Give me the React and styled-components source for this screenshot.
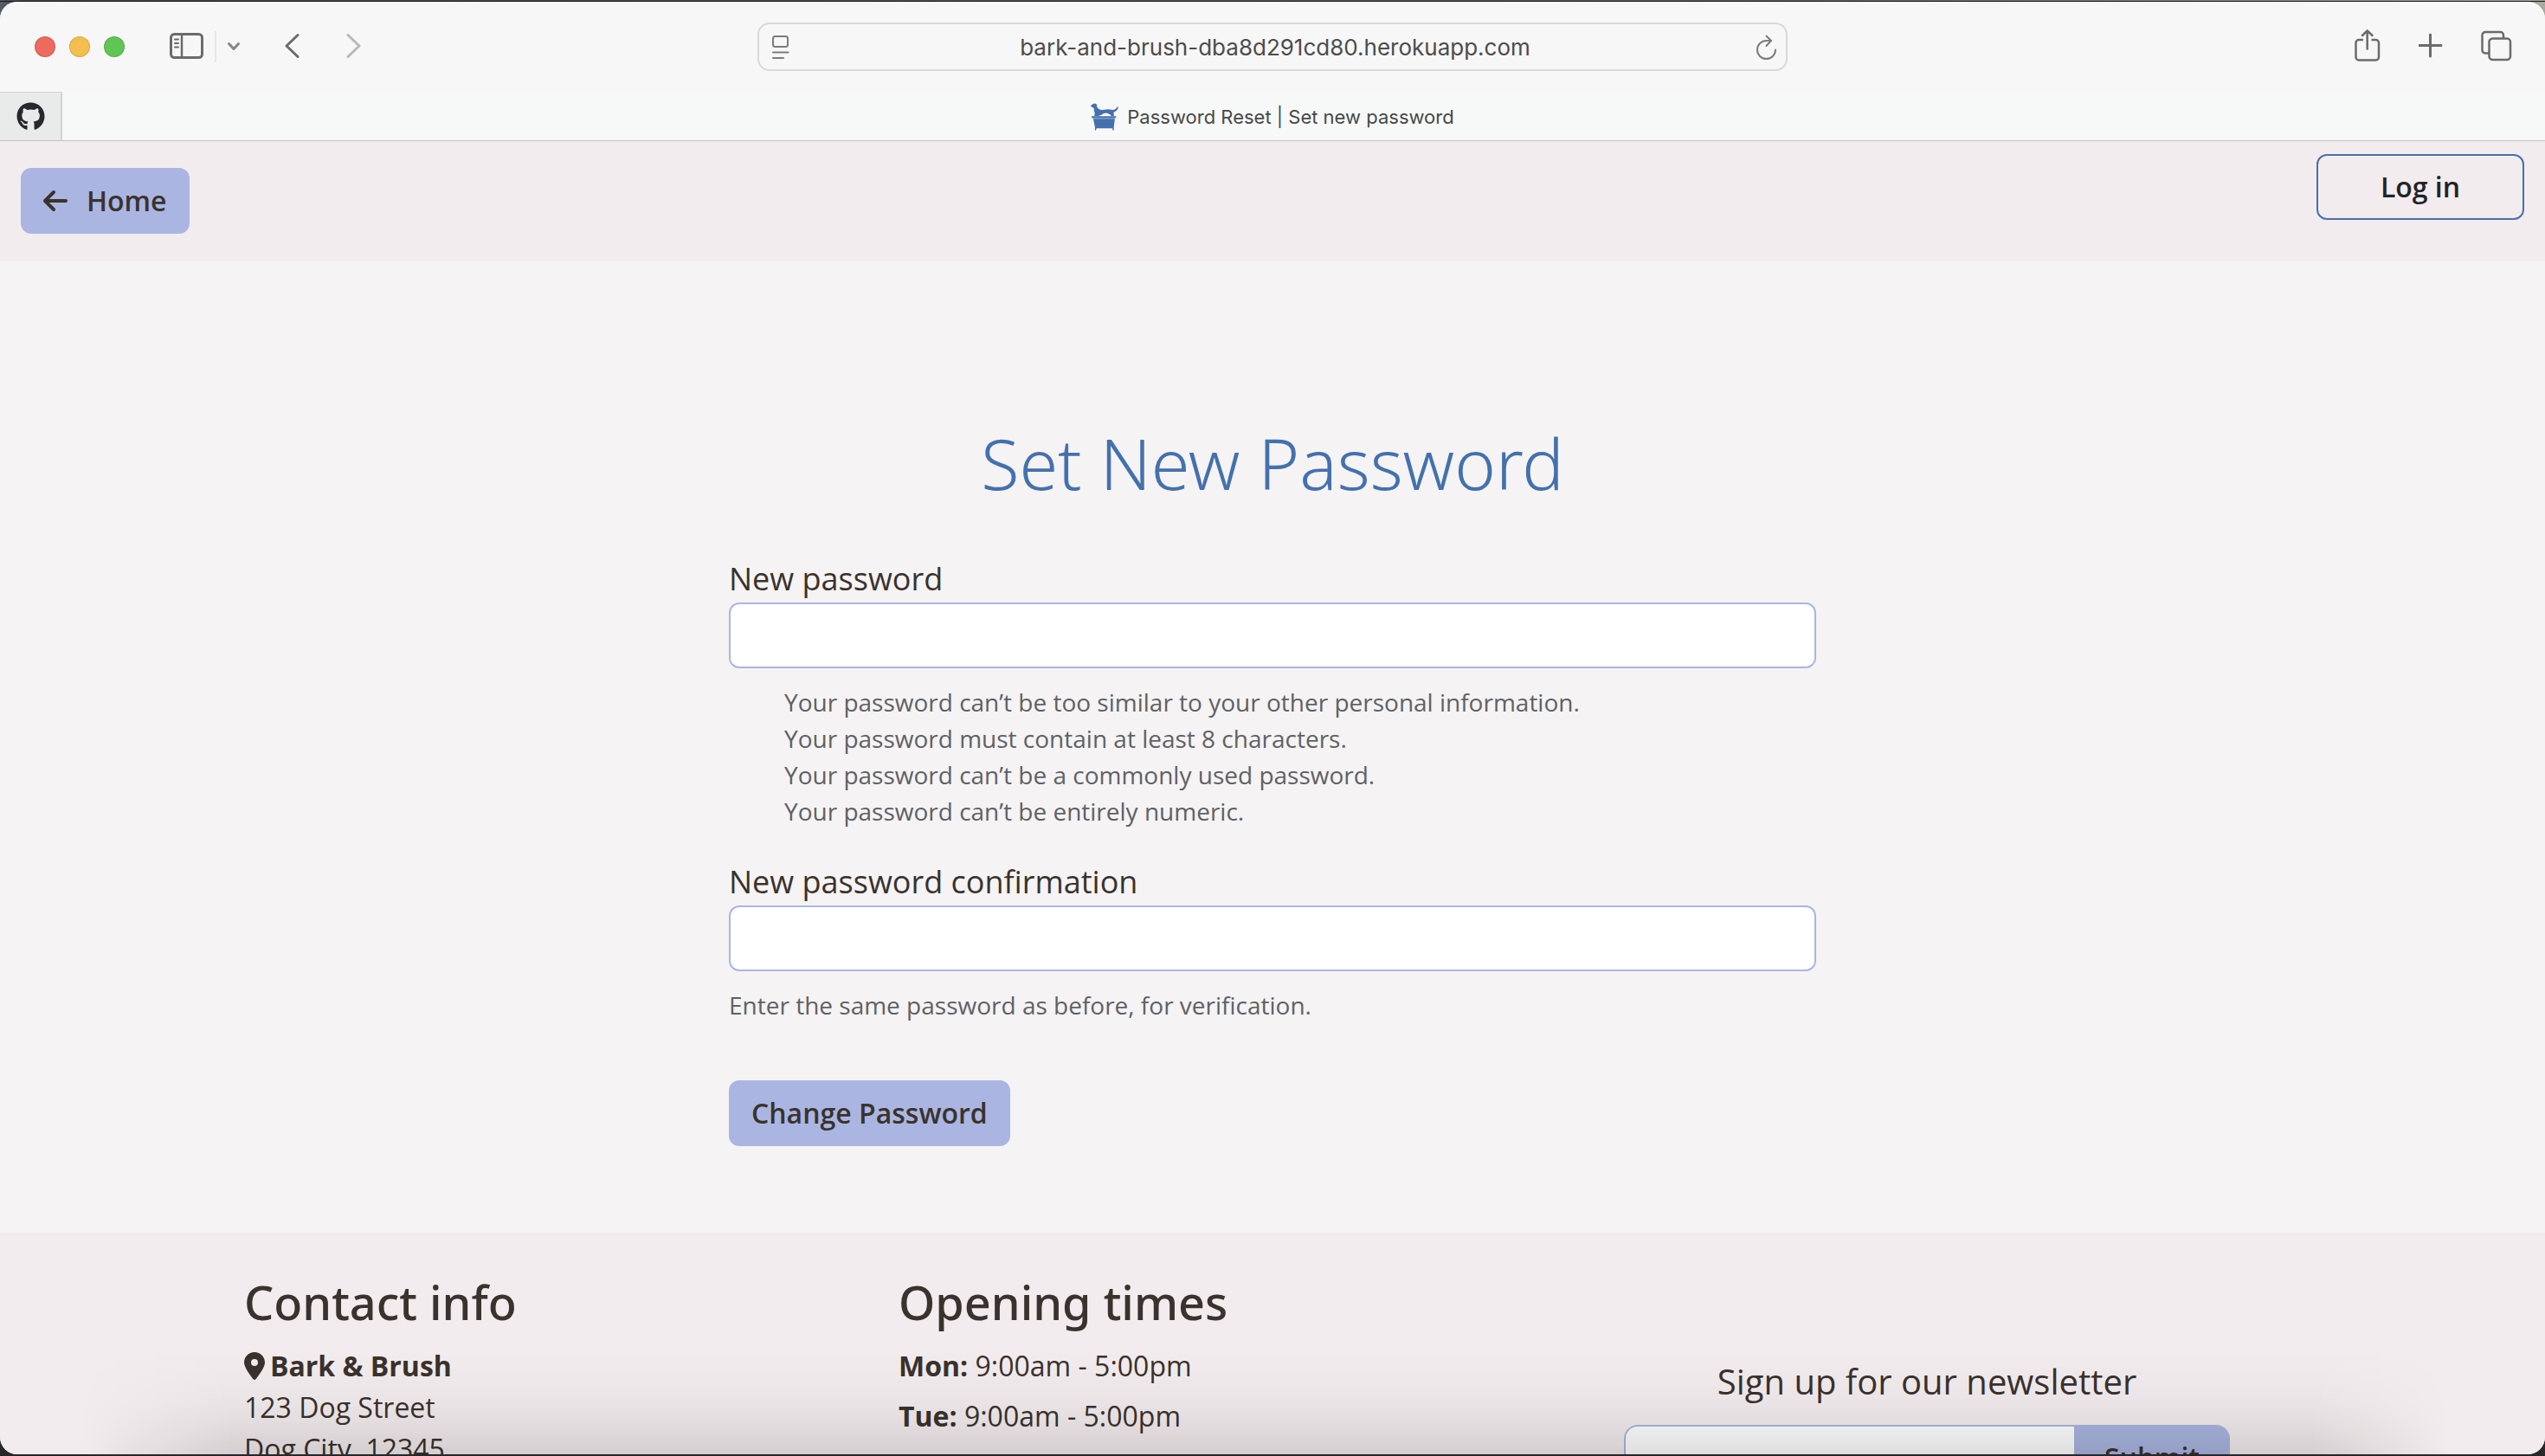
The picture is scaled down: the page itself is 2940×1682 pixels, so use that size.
import React from "react";
import styled, { createGlobalStyle } from "styled-components";
import { FaArrowLeft, FaLocationDot } from "react-icons/fa6";
import { FaGithub } from "react-icons/fa";

const color = {
  ink: "#3a322d",
  brand: "#4471ad",
  lilac: "#aab6e1",
  blush: "#f3ecee",
  page: "#f5f3f4",
  muted: "#5f6164",
  chromeIcon: "#6b6b6b",
};

const bodyFont = '"Open Sans", "Noto Sans", sans-serif';
const headingFont = '"Noto Sans", "Open Sans", sans-serif';
const chromeFont = 'Inter, "Liberation Sans", sans-serif';

const GlobalStyle = createGlobalStyle`
  *, *::before, *::after { box-sizing: border-box; }
  html, body, #root { height: 100%; }
  body {
    margin: 0;
    overflow: hidden;
    font-family: ${bodyFont};
    font-size: 32px;
    line-height: 48px;
    color: ${color.ink};
  }
  h1, h2, h3, p, ul { margin: 0; padding: 0; font-weight: 400; }
  button, input { font: inherit; color: inherit; margin: 0; }
`;

/* Desktop and browser window */

const Desktop = styled.div`
  height: 100%;
  padding: 2px 0;
  background:
    linear-gradient(to bottom, transparent 1px, #161616 1px, #161616 2px, transparent 2px),
    linear-gradient(to top, #29272a 40px, transparent 40px),
    linear-gradient(to right, #565d68, #42464a 30px, #5f6057 70%, #a9aa9f);
`;

const Window = styled.div`
  height: 100%;
  display: flex;
  flex-direction: column;
  overflow: hidden;
  border-radius: 20px;
  background: ${color.page};
`;

const Toolbar = styled.header`
  flex: none;
  display: grid;
  grid-template-columns: 1fr minmax(0, 1190px) 1fr;
  align-items: center;
  height: 104px;
  background: #f7f7f7;
`;

const ToolGroup = styled.div`
  display: flex;
  align-items: center;
  justify-content: ${(p) => (p.$end ? "flex-end" : "flex-start")};
  gap: ${(p) => p.$gap}px;
  padding: 0 38px 0 40px;
`;

const Cluster = styled.div`
  display: flex;
  align-items: center;
  gap: ${(p) => p.$gap}px;
`;

const Light = styled.button`
  width: 24px;
  height: 24px;
  padding: 0;
  border: 1px solid rgba(0, 0, 0, 0.12);
  border-radius: 50%;
  background: ${(p) => p.$fill};
`;

const ToolButton = styled.button`
  display: flex;
  padding: 0;
  border: 0;
  background: none;
  color: ${(p) => p.$tone || color.chromeIcon};

  svg {
    display: block;
    fill: none;
    stroke: currentColor;
    stroke-width: 3;
    stroke-linecap: round;
    stroke-linejoin: round;
  }
`;

const Separator = styled.span`
  width: 2px;
  height: 36px;
  background: #e6e6e6;
`;

const AddressBar = styled.div`
  display: flex;
  align-items: center;
  height: 56px;
  padding: 2px 10px 0 14px;
  border: 2px solid #d9d9d9;
  border-radius: 14px;
`;

const AddressInput = styled.input`
  flex: 1;
  min-width: 0;
  padding: 0;
  border: 0;
  outline: 0;
  background: none;
  font-family: ${chromeFont};
  font-size: 26px;
  line-height: 36px;
  text-align: center;
  color: #4c4c4c;
`;

const TabBar = styled.nav`
  flex: none;
  display: flex;
  height: 57px;
  border-bottom: 1px solid #c3c4c4;
  background: #f7f9f8;
`;

const PinnedTab = styled.button`
  display: flex;
  align-items: center;
  justify-content: center;
  width: 72px;
  padding: 0;
  border: solid #d3d5d4;
  border-width: 1px 2px 0 0;
  background: #e9ebea;
  color: #24292f;
`;

const ActiveTab = styled.button`
  flex: 1;
  display: flex;
  align-items: center;
  justify-content: center;
  gap: 10px;
  padding: 2px 72px 0 0;
  border: 0;
  background: none;
  font-family: ${chromeFont};
  font-size: 22px;
  line-height: 32px;
  color: #474948;
`;

/* Web page */

const Viewport = styled.div`
  flex: 1;
  min-height: 0;
  position: relative;
  overflow: hidden;

  &::after {
    content: "";
    position: absolute;
    inset: auto 0 0;
    height: 120px;
    pointer-events: none;
    background: linear-gradient(
      to top,
      rgba(0, 0, 0, 0.125),
      rgba(0, 0, 0, 0.08) 22%,
      rgba(0, 0, 0, 0.03) 50%,
      transparent
    );
    mask-image: linear-gradient(
      to right,
      transparent 90px,
      #000 270px,
      #000 calc(100% - 270px),
      transparent calc(100% - 110px)
    );
  }
`;

const SiteNav = styled.nav`
  display: flex;
  align-items: flex-start;
  justify-content: space-between;
  padding: 15px 24px 32px;
  background: ${color.blush};
`;

const Button = styled.button`
  display: inline-flex;
  align-items: center;
  justify-content: center;
  gap: 22px;
  min-width: ${(p) => (p.$wide ? "240px" : "auto")};
  padding: 12px 24px;
  border: 2px solid ${(p) => (p.$outline ? color.brand : color.lilac)};
  border-radius: 12px;
  background: ${(p) => (p.$outline ? "transparent" : color.lilac)};
  color: ${(p) => (p.$outline ? "#212529" : color.ink)};
  font-size: 32px;
  font-weight: 600;
  line-height: 48px;
  text-decoration: none;
`;

const ArrowIcon = styled(FaArrowLeft)`
  width: 28px;
  height: 32px;
`;

const PinIcon = styled(FaLocationDot)`
  width: 24px;
  height: 32px;
`;

const HomeSlot = styled.div`
  display: flex;
  padding-top: 16px;
`;

const Main = styled.main`
  padding: 184px 24px 100px;
  background: ${color.page};
`;

const Title = styled.h1`
  margin-bottom: 58px;
  font-family: ${headingFont};
  font-size: 81px;
  font-weight: 300;
  line-height: 98px;
  text-align: center;
  color: ${color.brand};
`;

const Form = styled.form`
  display: flex;
  flex-direction: column;
  align-items: flex-start;
  max-width: 1256px;
  margin: 0 auto;
`;

const Field = styled.div`
  width: 100%;
  margin-bottom: ${(p) => (p.$last ? 66 : 34)}px;
`;

const Label = styled.label`
  display: block;
  font-size: 36px;
  line-height: 54px;
`;

const PasswordInput = styled.input`
  display: block;
  width: 100%;
  height: 76px;
  padding: 12px 24px;
  border: 2px solid ${color.lilac};
  border-radius: 12px;
  background: #fff;
`;

const Help = styled.div`
  margin-top: 18px;
  font-size: 28px;
  line-height: 42px;
  color: ${color.muted};
`;

const Rules = styled.ul`
  padding-left: 64px;
  list-style: none;
`;

const Footer = styled.footer`
  display: grid;
  grid-template-columns: 7fr 7fr 8fr;
  padding: 46px 282px 100px;
  background: ${color.blush};
`;

const FooterHeading = styled.h2`
  margin-bottom: 16px;
  font-family: ${headingFont};
  font-size: 54px;
  font-weight: 500;
  line-height: 68px;
`;

const ShopName = styled.strong`
  display: flex;
  align-items: center;
  gap: 6px;
  font-weight: 700;
`;

const Address = styled.address`
  font-style: normal;
`;

const Hours = styled.ul`
  display: grid;
  gap: 10px;
  list-style: none;
`;

const Newsletter = styled.form`
  display: flex;
  flex-direction: column;
  align-items: center;
  gap: 26px;
  padding-top: 102px;
`;

const NewsletterLabel = styled.label`
  font-size: 40px;
  line-height: 48px;
`;

const InputGroup = styled.div`
  display: flex;
  width: 100%;
  max-width: 700px;
  height: 76px;
`;

const EmailInput = styled.input`
  flex: 1;
  min-width: 0;
  padding: 12px 24px;
  border: 2px solid ${color.lilac};
  border-right: 0;
  border-radius: 16px 0 0 16px;
  background: #fff;
`;

const SubmitButton = styled.button`
  width: 180px;
  padding: 0;
  border: 0;
  border-radius: 0 16px 16px 0;
  background: ${color.lilac};
  font-weight: 600;
`;

/* Icons */

const SidebarIcon = () => (
  <svg width="40" height="40" viewBox="0 0 40 40">
    <rect x="1.5" y="5.5" width="36" height="27" rx="4" />
    <path d="M14 5.5v27" strokeWidth="2.5" />
    <path d="M6 11.5h4M6 16h4M6 20.5h4" strokeWidth="2" />
  </svg>
);

const ChevronIcon = () => (
  <svg width="16" height="12" viewBox="0 0 16 12">
    <path d="M2.5 2.5 8 8.5l5.5-6" />
  </svg>
);

const BackIcon = () => (
  <svg width="18" height="32" viewBox="0 0 18 32">
    <path d="M16 2.5 3 15l13 12.500" />
  </svg>
);

const ForwardIcon = () => (
  <svg width="18" height="32" viewBox="0 0 18 32">
    <path d="M2 2.5 15 15 2 27.5" />
  </svg>
);

const PageMenuIcon = () => (
  <svg width="26" height="28" viewBox="0 0 26 28">
    <g strokeWidth="2">
      <rect x="2" y="1" width="17" height="12" rx="2.5" />
      <path d="M2 19.500h17.500M2 26h12" />
    </g>
  </svg>
);

const ReloadIcon = () => (
  <svg width="24" height="30" viewBox="0 0 24 30">
    <g strokeWidth="2">
      <path d="M22 17.5a10.5 10.5 0 1 1-10.500-10.500h5" />
      <path d="M11.5 1.500 17 7l-5.500 6" />
    </g>
  </svg>
);

const ShareIcon = () => (
  <svg width="30" height="40" viewBox="0 0 30 40">
    <path
      d="M10 12H5a3.5 3.5 0 0 0-3.500 3.500V32A3.500 3.500 0 0 0 5 35.500h19.500A3.500 3.500 0 0 0 28 32V15.500A3.500 3.500 0 0 0 24.500 12h-5"
      strokeWidth="2.5"
      strokeLinecap="butt"
    />
    <path d="M14.7 22.500V1.500M9 7l5.700-5.500L20.500 7" strokeWidth="2.5" />
  </svg>
);

const PlusIcon = () => (
  <svg width="28" height="40" viewBox="0 0 28 40">
    <path d="M13.5 6v25M1 18.500h25" />
  </svg>
);

const TabsIcon = () => (
  <svg width="36" height="40" viewBox="0 0 36 40">
    <rect x="9.5" y="10.5" width="24.5" height="24.5" rx="4" strokeWidth="2.5" />
    <path
      d="M9 27.500H5A3.500 3.500 0 0 1 1.500 24V6.500A3.500 3.500 0 0 1 5 3h17.500A3.500 3.500 0 0 1 26 6.500V10"
      strokeWidth="2.5"
      strokeLinecap="butt"
    />
  </svg>
);

const DogBathIcon = () => (
  <svg width="32" height="32" viewBox="0 0 96 96" fill={color.brand} aria-hidden="true">
    <path d="M1 9Q4 5 8 4Q13-1 19 3Q23 7 21 13L28 21Q34 25 46 23Q62 20 76 24Q84 24 88 19L94 11Q96 15 94 20Q90 28 82 31Q78 34 80 39L81 45H12Q15 38 13 31Q10 24 11 17Q5 15 1 13Z" />
    <path d="M28 46q4-5 10-5q4-6 10-5q7-3 12 1q8 1 12 9z" fill="#fff" />
    <path d="M3 46H88V52H84L80 85V95H77L75 88H20L18 95H15V85L8 52H3Z" />
    <path d="M8 53.5H84" stroke="#f7f9f8" strokeWidth="1.5" />
  </svg>
);

const rules = [
  "Your password can’t be too similar to your other personal information.",
  "Your password must contain at least 8 characters.",
  "Your password can’t be a commonly used password.",
  "Your password can’t be entirely numeric.",
];

const hours = [
  ["Mon:", "9:00am - 5:00pm"],
  ["Tue:", "9:00am - 5:00pm"],
];

const BrowserChrome = () => (
  <>
    <Toolbar>
      <ToolGroup $gap={52}>
        <Cluster $gap={16}>
          <Light aria-label="Close" $fill="#ec6a5e" />
          <Light aria-label="Minimise" $fill="#f4bf4f" />
          <Light aria-label="Zoom" $fill="#61c554" />
        </Cluster>
        <Cluster $gap={50}>
          <Cluster $gap={12}>
            <ToolButton aria-label="Show sidebar"><SidebarIcon /></ToolButton>
            <Separator />
            <ToolButton aria-label="Tab groups" $tone="#87858c"><ChevronIcon /></ToolButton>
          </Cluster>
          <Cluster $gap={54}>
            <ToolButton aria-label="Back"><BackIcon /></ToolButton>
            <ToolButton aria-label="Forward" $tone="#b9b9b9"><ForwardIcon /></ToolButton>
          </Cluster>
        </Cluster>
      </ToolGroup>
      <AddressBar>
        <ToolButton aria-label="Page menu" $tone="#7c7c7c"><PageMenuIcon /></ToolButton>
        <AddressInput
          type="text"
          aria-label="Address"
          defaultValue="bark-and-brush-dba8d291cd80.herokuapp.com"
        />
        <ToolButton aria-label="Reload" $tone="#7c7c7c"><ReloadIcon /></ToolButton>
      </AddressBar>
      <ToolGroup $end $gap={44}>
        <ToolButton aria-label="Share"><ShareIcon /></ToolButton>
        <ToolButton aria-label="New tab"><PlusIcon /></ToolButton>
        <ToolButton aria-label="Show all tabs"><TabsIcon /></ToolButton>
      </ToolGroup>
    </Toolbar>
    <TabBar aria-label="Tabs">
      <PinnedTab aria-label="GitHub"><FaGithub size={33} /></PinnedTab>
      <ActiveTab><DogBathIcon />Password Reset | Set new password</ActiveTab>
    </TabBar>
  </>
);

export default function App() {
  return (
    <Desktop>
      <GlobalStyle />
      <Window>
        <BrowserChrome />
        <Viewport>
          <SiteNav aria-label="Site">
            <HomeSlot>
              <Button as="a" href="#home"><ArrowIcon />Home</Button>
            </HomeSlot>
            <Button as="a" href="#login" $outline $wide>Log in</Button>
          </SiteNav>
          <Main>
            <Title>Set New Password</Title>
            <Form onSubmit={(e) => e.preventDefault()}>
              <Field>
                <Label htmlFor="new-password">New password</Label>
                <PasswordInput id="new-password" type="password" aria-describedby="password-rules" />
                <Help id="password-rules">
                  <Rules>
                    {rules.map((rule) => <li key={rule}>{rule}</li>)}
                  </Rules>
                </Help>
              </Field>
              <Field $last>
                <Label htmlFor="confirm-password">New password confirmation</Label>
                <PasswordInput id="confirm-password" type="password" aria-describedby="confirm-help" />
                <Help id="confirm-help">Enter the same password as before, for verification.</Help>
              </Field>
              <Button type="submit">Change Password</Button>
            </Form>
          </Main>
          <Footer>
            <section>
              <FooterHeading>Contact info</FooterHeading>
              <Address>
                <ShopName><PinIcon />Bark &amp; Brush</ShopName>
                123 Dog Street<br />
                Dog City, 12345
              </Address>
            </section>
            <section>
              <FooterHeading>Opening times</FooterHeading>
              <Hours>
                {hours.map(([day, time]) => (
                  <li key={day}><strong>{day}</strong> {time}</li>
                ))}
              </Hours>
            </section>
            <Newsletter onSubmit={(e) => e.preventDefault()}>
              <NewsletterLabel htmlFor="email">Sign up for our newsletter</NewsletterLabel>
              <InputGroup>
                <EmailInput id="email" type="email" />
                <SubmitButton type="submit">Submit</SubmitButton>
              </InputGroup>
            </Newsletter>
          </Footer>
        </Viewport>
      </Window>
    </Desktop>
  );
}
